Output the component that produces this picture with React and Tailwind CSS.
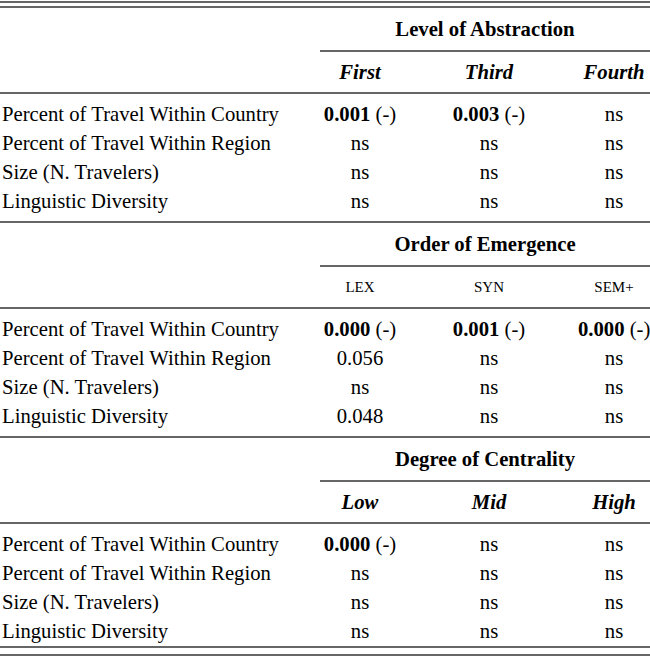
import React from "react";

const ROW_LABELS = [
  "Percent of Travel Within Country",
  "Percent of Travel Within Region",
  "Size (N. Travelers)",
  "Linguistic Diversity",
];

const SECTIONS = [
  {
    title: "Level of Abstraction",
    cols: ["First", "Third", "Fourth"],
    style: "italic",
    rows: [
      [{ v: "0.001", b: true }, { v: "0.003", b: true }, { v: "ns" }],
      [{ v: "ns" }, { v: "ns" }, { v: "ns" }],
      [{ v: "ns" }, { v: "ns" }, { v: "ns" }],
      [{ v: "ns" }, { v: "ns" }, { v: "ns" }],
    ],
  },
  {
    title: "Order of Emergence",
    cols: ["LEX", "SYN", "SEM+"],
    style: "small",
    rows: [
      [{ v: "0.000", b: true }, { v: "0.001", b: true }, { v: "0.000", b: true }],
      [{ v: "0.056" }, { v: "ns" }, { v: "ns" }],
      [{ v: "ns" }, { v: "ns" }, { v: "ns" }],
      [{ v: "0.048" }, { v: "ns" }, { v: "ns" }],
    ],
  },
  {
    title: "Degree of Centrality",
    cols: ["Low", "Mid", "High"],
    style: "italic",
    rows: [
      [{ v: "0.000", b: true }, { v: "ns" }, { v: "ns" }],
      [{ v: "ns" }, { v: "ns" }, { v: "ns" }],
      [{ v: "ns" }, { v: "ns" }, { v: "ns" }],
      [{ v: "ns" }, { v: "ns" }, { v: "ns" }],
    ],
  },
];

const GRID = "grid grid-cols-[320px_80px_178px_72px]";

const Rule = () => <div className="h-[2px] bg-[#666]" />;

function Cell({ cell }) {
  if (cell.b) {
    return (
      <span>
        <span className="font-bold">{cell.v}</span> (-)
      </span>
    );
  }
  return <span>{cell.v}</span>;
}

function Section({ section, last }) {
  return (
    <div>
      <div className={GRID}>
        <div />
        <div className="col-span-3 flex h-[42px] items-center justify-center font-bold">
          {section.title}
        </div>
      </div>
      <div className="ml-[320px] h-[2px] bg-[#666]" />
      <div className={`${GRID} h-[40px] items-center`}>
        <div />
        {section.cols.map((c) => (
          <div
            key={c}
            className={
              section.style === "italic"
                ? "text-center font-bold italic"
                : "text-center text-[15px]"
            }
          >
            {c}
          </div>
        ))}
      </div>
      <Rule />
      <div className={last ? "pt-[6px] pb-0" : "pt-[6px] pb-[5px]"}>
        {section.rows.map((row, i) => (
          <div key={i} className={`${GRID} h-[29px] items-center`}>
            <div className="pl-[2px] whitespace-nowrap">{ROW_LABELS[i]}</div>
            {row.map((cell, j) => (
              <div key={j} className="text-center whitespace-nowrap">
                <Cell cell={cell} />
              </div>
            ))}
          </div>
        ))}
      </div>
    </div>
  );
}

export default function App() {
  return (
    <div className="w-[650px] h-[659px] overflow-hidden bg-white text-[20.7px] leading-none text-black font-['Liberation_Serif',serif]">
      <div className="pt-[1px] flex flex-col gap-[3px]">
        <Rule />
        <Rule />
      </div>
      {SECTIONS.map((s, i) => (
        <div key={s.title}>
          {i > 0 && <Rule />}
          <Section section={s} last={i === SECTIONS.length - 1} />
        </div>
      ))}
      <div className="flex flex-col gap-[6px]">
        <Rule />
        <Rule />
      </div>
    </div>
  );
}
